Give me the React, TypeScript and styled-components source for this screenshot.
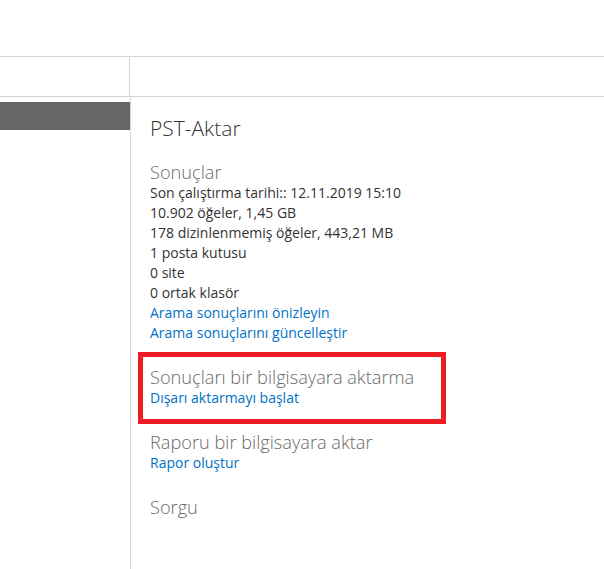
import styled, { createGlobalStyle } from "styled-components";

const GlobalStyle = createGlobalStyle`
  html, body {
    margin: 0;
    padding: 0;
    background: #fff;
  }
  body {
    font-family: "Open Sans", "Noto Sans", sans-serif;
    color: #333;
  }
`;

const Page = styled.div`
  display: flex;
  flex-direction: column;
  width: 604px;
  height: 569px;
  overflow: hidden;
`;

const Header = styled.div`
  height: 57px;
  border-bottom: 1px solid #d2d6da;
  box-sizing: border-box;
`;

const Toolbar = styled.div`
  display: flex;
  height: 40px;
  border-bottom: 1px solid #d2d6da;
  box-sizing: border-box;
`;

const ToolbarCell = styled.div`
  width: 130px;
  border-right: 1px solid #d2d6da;
  box-sizing: border-box;
`;

const Main = styled.div`
  flex: 1;
  display: grid;
  grid-template-columns: 130px 1fr;
`;

const Nav = styled.div`
  padding-top: 5px;
`;

const NavItem = styled.div<{ $active?: boolean }>`
  height: 28px;
  background: ${(p) => (p.$active ? "#666666" : "transparent")};
`;

const Panel = styled.div`
  border-left: 1px solid #d2d6da;
  padding: 17px 20px 0 19px;
  display: flex;
  flex-direction: column;
`;

const Title = styled.h1`
  margin: 0 0 19px;
  font-size: 21px;
  line-height: 28px;
  font-weight: 300;
  color: #333;
`;

const Section = styled.div`
  position: relative;
  display: flex;
  flex-direction: column;
  margin-bottom: 23px;
`;

const Heading = styled.h2`
  margin: 0;
  font-size: 18.2px;
  line-height: 22px;
  font-weight: 300;
  color: #6a6a6a;
`;

const Line = styled.div`
  font-size: 14px;
  line-height: 20px;
  color: #333;
  white-space: nowrap;
`;

const Link = styled.a`
  font-size: 14px;
  line-height: 20px;
  color: #0072c6;
  text-decoration: none;
  white-space: nowrap;
  cursor: pointer;
`;

const Highlight = styled.div`
  position: absolute;
  top: -14px;
  left: -12px;
  width: 308px;
  bottom: -16px;
  border: 5px solid #ed1c24;
  box-sizing: border-box;
  pointer-events: none;
`;

const results = [
  "Son çalıştırma tarihi:: 12.11.2019 15:10",
  "10.902 öğeler, 1,45 GB",
  "178 dizinlenmemiş öğeler, 443,21 MB",
  "1 posta kutusu",
  "0 site",
  "0 ortak klasör",
];

export default function App() {
  return (
    <>
      <GlobalStyle />
      <Page>
        <Header />
        <Toolbar>
          <ToolbarCell />
        </Toolbar>
        <Main>
          <Nav>
            <NavItem $active />
          </Nav>
          <Panel>
            <Title>PST-Aktar</Title>
            <Section>
              <Heading>Sonuçlar</Heading>
              {results.map((r) => (
                <Line key={r}>{r}</Line>
              ))}
              <Link>Arama sonuçlarını önizleyin</Link>
              <Link>Arama sonuçlarını güncelleştir</Link>
            </Section>
            <Section>
              <Highlight />
              <Heading>Sonuçları bir bilgisayara aktarma</Heading>
              <Link>Dışarı aktarmayı başlat</Link>
            </Section>
            <Section>
              <Heading>Raporu bir bilgisayara aktar</Heading>
              <Link>Rapor oluştur</Link>
            </Section>
            <Section>
              <Heading>Sorgu</Heading>
            </Section>
          </Panel>
        </Main>
      </Page>
    </>
  );
}
